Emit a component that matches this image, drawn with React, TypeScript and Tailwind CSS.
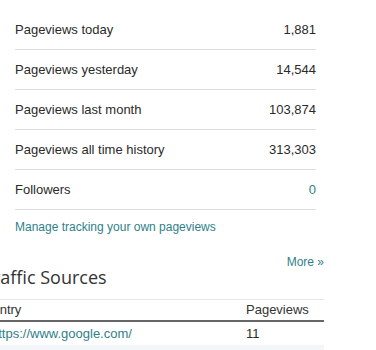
import React from "react";

const rows: { label: string; value: string; link?: boolean }[] = [
  { label: "Pageviews today", value: "1,881" },
  { label: "Pageviews yesterday", value: "14,544" },
  { label: "Pageviews last month", value: "103,874" },
  { label: "Pageviews all time history", value: "313,303" },
  { label: "Followers", value: "0", link: true },
];

export default function App() {
  return (
    <div className="w-[376px] h-[350px] overflow-hidden bg-white text-[13px] text-[#2a2a2a] font-['Liberation_Sans',Arial,sans-serif]">
      <div className="ml-[15px] w-[301px] pt-[10px]">
        {rows.map((r) => (
          <div
            key={r.label}
            className="h-10 flex items-center justify-between border-b border-[#dddddd]"
          >
            <span>{r.label}</span>
            <span className={r.link ? "text-[#2f7f8a]" : ""}>{r.value}</span>
          </div>
        ))}
        <div className="pt-[10px] text-[12px] leading-[15px] text-[#2f7f8a]">
          Manage tracking your own pageviews
        </div>
      </div>
      <div className="ml-[-17px] w-[341px] mt-[20px]">
        <div className="flex justify-end text-[12px] leading-[15px] text-[#2f7f8a]">
          More »
        </div>
        <div className="font-['Open_Sans',sans-serif] text-[18px] leading-[24px] text-[#333] mt-[-5px]">
          Traffic Sources
        </div>
        <div className="mt-[10px] border-t border-[#e5e5e5]">
          <div className="flex h-[22px] items-center border-b-2 border-[#666]">
            <div className="flex-1 pl-[8px] text-[#333]">Entry</div>
            <div className="w-[86px] pl-[8px] text-[#333]">Pageviews</div>
          </div>
          <div className="flex h-[23px] items-center">
            <div className="flex-1 pl-[8px] text-[#2f7f8a]">https://www.google.com/</div>
            <div className="w-[86px] pl-[8px]">11</div>
          </div>
          <div className="flex h-[24px] items-center bg-[#f3f7f9]">
            <div className="flex-1 pl-[8px] text-[#2f7f8a]"></div>
            <div className="w-[86px] pl-[8px]"></div>
          </div>
        </div>
      </div>
    </div>
  );
}
